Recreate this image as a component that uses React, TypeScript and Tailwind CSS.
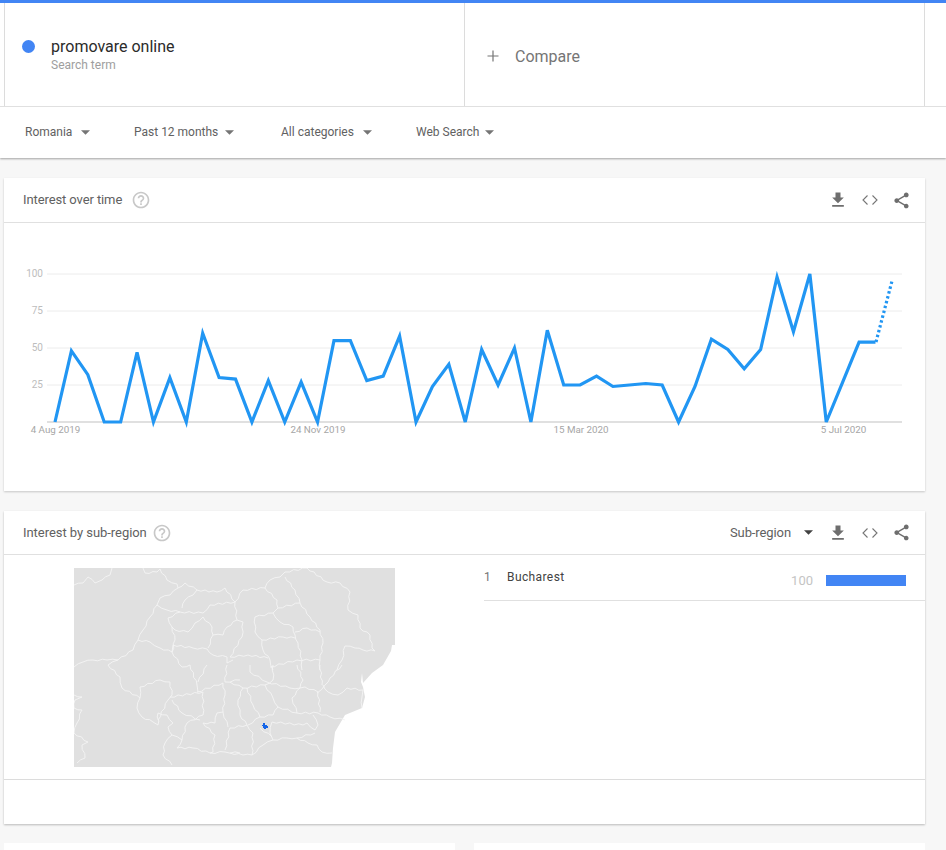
const values = [0, 48, 32, 0, 0, 47, 0, 30, 0, 60, 30, 29, 0, 28, 0, 27, 0, 55, 55, 28, 31, 58, 0, 24, 39, 0, 49, 25, 50, 0, 62, 25, 25, 31, 24, 25, 26, 25, 0, 24, 56, 49, 36, 49, 98, 61, 100, 0, 27, 54, 54];

const toPoint = (v: number, i: number) => `${55 + i * 16.41},${422 - v * 1.48}`;

const borders = [
  "112,568 110,575 102,580 95,583 88,577 83,583 74,585",
  "143,568 145,573 157,572 160,569 167,580 177,584 178,588 185,583 197,590 193,595 185,600 182,608",
  "178,588 170,595 160,598 157,605 150,617 143,630 138,640 133,650 118,660 107,660 93,660 83,662 74,667",
  "138,640 150,642 160,648 172,652 173,645 193,648 207,649 213,655 227,657 227,663 233,660",
  "157,605 167,610 180,612 203,613 210,605 235,602 237,620 227,627 223,635 213,635 208,648",
  "180,612 168,618 172,627 175,630 188,632 195,623 203,617 212,627 213,635",
  "172,627 175,640 172,652 182,667",
  "197,590 217,592 225,588 235,602",
  "280,577 285,572 307,568 327,582 340,583 350,592 348,610 358,615 360,628 370,635 372,648 375,651 363,650 355,648 345,646 342,660 337,670",
  "285,577 295,590 300,603 310,617 320,630 323,643 320,660 320,670",
  "280,577 270,580 265,588 243,590 235,602",
  "265,588 277,600 278,608 300,603",
  "278,608 273,613 255,617 255,632 262,640 263,650 270,660 273,670",
  "273,613 280,622 293,627 295,635 298,643 302,660 302,670",
  "295,632 307,628 320,632",
  "262,640 283,637 295,638",
  "243,622 242,637 230,657 248,655 268,658",
  "237,620 243,622",
  "270,667 297,660 320,660",
  "118,660 108,665 120,677 122,688 140,698 137,708 142,717 153,722 158,725 158,713 167,715 173,723 168,727 172,735 165,743 163,755 172,765",
  "140,698 140,687 160,680 170,682 172,695 168,700 158,720",
  "170,697 203,692 203,715 187,723 182,740 172,735",
  "172,700 182,713 200,720",
  "203,723 215,735 213,752 210,753 193,748 177,748 182,740",
  "210,753 225,752 240,753",
  "225,750 230,728 247,725",
  "228,727 223,712 217,713 215,723 203,723",
  "197,692 223,683 225,695 223,712",
  "190,665 197,685 198,692",
  "207,665 198,682",
  "227,665 225,682 240,680",
  "182,667 190,665",
  "74,695 82,697 75,700 74,708 82,710 77,723 74,733 88,742 82,745 85,758 77,763",
  "230,682 243,688 265,685 273,680 273,665",
  "247,688 253,705 260,717",
  "265,685 273,698 278,707 273,715 260,717 248,725",
  "238,700 240,715 247,725",
  "243,688 238,700",
  "267,682 290,688 300,688 305,687 318,692 320,712",
  "278,707 297,713 318,713 330,717 345,720",
  "297,713 292,698 300,688",
  "272,722 303,725 307,723 315,730 318,725 313,715",
  "272,722 270,733 273,740 287,738 297,738 315,733",
  "273,740 263,745 252,755 243,755 230,753",
  "247,725 253,733 252,755",
  "297,738 308,743 317,745 322,752 332,753",
  "260,728 272,737",
  "323,685 328,692 338,695 347,688 363,690 362,697 362,708",
  "317,693 325,685 330,678 342,665",
  "297,665 303,680 300,688",
  "320,665 322,685",
  "250,665 250,672 267,682",
];

// borders on the map are wobbly, split each segment and nudge the middle points
const wobble = (pts: string) => {
  const list = pts.split(" ").map((p) => p.split(",").map(Number));
  const out: string[] = [];
  list.forEach(([x, y], i) => {
    out.push(`${x},${y}`);
    const next = list[i + 1];
    if (!next) return;
    const [nx, ny] = next;
    const len = Math.hypot(nx - x, ny - y);
    const steps = Math.max(1, Math.floor(len / 4));
    for (let s = 1; s < steps; s++) {
      const off = s % 2 ? 0.8 : -0.8;
      out.push(`${x + ((nx - x) * s) / steps - ((ny - y) / len) * off},${y + ((ny - y) * s) / steps + ((nx - x) / len) * off}`);
    }
  });
  return out.join(" ");
};

function Caret({ dark }: { dark?: boolean }) {
  return (
    <svg width="9" height="5" viewBox="0 0 10 5" className={dark ? "text-[#424242]" : "text-[#757575]"}>
      <path d="M0 0h10L5 5z" fill="currentColor" />
    </svg>
  );
}

function Filter({ label, className }: { label: string; className: string }) {
  return (
    <div className={`flex items-center ${className}`}>
      <span className="-mt-[2px] text-[12px] text-[#616161]">{label}</span>
    </div>
  );
}

function Help() {
  return (
    <svg width="20" height="20" viewBox="0 0 24 24" fill="#c8c8c8">
      <path d="M11 18h2v-2h-2v2zm1-16C6.48 2 2 6.48 2 12s4.48 10 10 10 10-4.48 10-10S17.52 2 12 2zm0 18c-4.41 0-8-3.59-8-8s3.59-8 8-8 8 3.59 8 8-3.59 8-8 8zm0-14c-2.21 0-4 1.79-4 4h2c0-1.1.9-2 2-2s2 .9 2 2c0 2-3 1.75-3 5h2c0-2.25 3-2.5 3-5 0-2.21-1.79-4-4-4z" />
    </svg>
  );
}

function Actions() {
  return (
    <div className="flex items-center gap-[12px]">
      <svg width="20" height="20" viewBox="0 0 24 24" fill="#6e6e6e">
        <path d="M19 9h-4V3H9v6H5l7 7 7-7zM5 18v2h14v-2H5z" />
      </svg>
      <svg width="20" height="20" viewBox="0 0 20 20" fill="none" stroke="#757575" strokeWidth="1.1">
        <path d="M7.5 5.5 3 10l4.500 4.500M12.500 5.500 17 10l-4.500 4.500" />
      </svg>
      <svg width="19" height="19" viewBox="0 0 24 24" fill="#6e6e6e">
        <path d="M18 16.080c-.76 0-1.440.3-1.960.77L8.910 12.700c.05-.23.09-.46.09-.7s-.04-.47-.09-.7l7.050-4.110c.54.5 1.250.81 2.040.81 1.660 0 3-1.340 3-3s-1.340-3-3-3-3 1.340-3 3c0 .24.04.47.09.7L8.040 9.810C7.500 9.310 6.790 9 6 9c-1.660 0-3 1.340-3 3s1.340 3 3 3c.79 0 1.500-.31 2.040-.81l7.120 4.160c-.05.21-.08.43-.08.65 0 1.610 1.310 2.920 2.920 2.920s2.920-1.310 2.920-2.920-1.310-2.920-2.920-2.920z" />
      </svg>
    </div>
  );
}

function Chart() {
  const ticks = [
    { label: "100", y: 274 },
    { label: "75", y: 311 },
    { label: "50", y: 348 },
    { label: "25", y: 385 },
  ];
  const dates = [
    { label: "4 Aug 2019", x: 55.5 },
    { label: "24 Nov 2019", x: 318 },
    { label: "15 Mar 2020", x: 581 },
    { label: "5 Jul 2020", x: 843.5 },
  ];
  return (
    <svg width="921" height="268" viewBox="4 223 921 268" className="block" fontFamily="Roboto, sans-serif">
      {ticks.map((t) => (
        <g key={t.label}>
          <line x1="47" x2="902" y1={t.y} y2={t.y} stroke="#ececec" strokeWidth="1" />
          <text x="43" y={t.y + 3} fontSize="10" textAnchor="end" fill="#bdbdbd">{t.label}</text>
        </g>
      ))}
      <line x1="47" x2="902" y1="422" y2="422" stroke="#d6d6d6" strokeWidth="1.5" />
      {dates.map((d) => (
        <text key={d.label} x={d.x} y="433" fontSize="9.800" textAnchor="middle" fill="#a6a6a6">{d.label}</text>
      ))}
      <polyline points={values.map(toPoint).join(" ")} fill="none" stroke="#2196f3" strokeWidth="3.200" strokeLinejoin="miter" />
      <line x1="876" y1="342" x2="892" y2="281" stroke="#2196f3" strokeWidth="3.200" strokeDasharray="2.500 2.500" />
    </svg>
  );
}

function RegionMap() {
  return (
    <svg width="321" height="199" viewBox="74 568 321 199" className="block">
      <path
        d="M74 568H395V645H392L391 651L383 665L372 673L363 683L362 673L361 682L363 687L365 697L362 708L345 715L335 732L333 748L332 763L331 767H74Z"
        fill="#e0e0e0"
      />
      {borders.map((pts, i) => (
        <polyline key={i} points={wobble(pts)} fill="none" stroke="#f4f4f4" strokeWidth="0.900" />
      ))}
      <path d="M263 723h2v2h2v1h1v2h-2v1h-2v-1h-1v-2h-1v-1h1z" fill="#1565e8" />
    </svg>
  );
}

export default function App() {
  return (
    <div className="h-[850px] overflow-hidden bg-[#f7f7f7] font-['Roboto',sans-serif]">
      <div className="relative z-10 bg-white shadow-[0_1px_2px_rgba(0,0,0,0.35)]">
        <div className="h-[3px] bg-[#4285f4]" />
        <div className="flex h-[104px] border-b border-[#e0e0e0] pl-[4px] pr-[21px]">
          <div className="flex w-[461px] items-start border-x border-[#dcdcdc] pl-[17px] pt-[35px]">
            <span className="mt-[2px] size-[13px] rounded-full bg-[#4285f4]" />
            <div className="ml-[16px] -mt-[1px]">
              <div className="text-[16px] leading-[20px] text-[#2b2b2b]">promovare online</div>
              <div className="text-[12px] leading-[16px] text-[#9e9e9e]">Search term</div>
            </div>
          </div>
          <div className="flex flex-1 items-start border-r border-[#dcdcdc] pl-[21px] pt-[44px]">
            <svg width="14" height="14" viewBox="0 0 14 14" stroke="#757575" strokeWidth="1.200" className="mt-[2px]">
              <path d="M7 1.500v11M1.500 7h11" />
            </svg>
            <span className="ml-[15px] text-[16px] leading-[20px] text-[#757575]">Compare</span>
          </div>
        </div>
        <div className="flex h-[51px] items-center pl-[25px]">
          <Filter label="Romania" className="w-[56px]" />
          <Caret />
          <Filter label="Past 12 months" className="ml-[44px] w-[91px]" />
          <Caret />
          <Filter label="All categories" className="ml-[47px] w-[82px]" />
          <Caret />
          <Filter label="Web Search" className="ml-[44px] w-[69px]" />
          <Caret />
        </div>
      </div>

      <div className="pl-[4px] pr-[21px] pt-[20px]">
        <section className="h-[313px] bg-white shadow-[0_1px_2px_rgba(0,0,0,0.2)]">
          <header className="flex h-[45px] items-center justify-between border-b border-[#e0e0e0] pl-[19px] pr-[14px]">
            <div className="flex items-center gap-[9px]">
              <h2 className="text-[13px] tracking-[-0.1px] text-[#616161]">Interest over time</h2>
              <Help />
            </div>
            <Actions />
          </header>
          <Chart />
        </section>

        <section className="mt-[20px] h-[313px] bg-white shadow-[0_1px_2px_rgba(0,0,0,0.25)]">
          <header className="flex h-[44px] items-center justify-between border-b border-[#e0e0e0] pl-[19px] pr-[14px]">
            <div className="flex items-center gap-[5px]">
              <h2 className="text-[13px] tracking-[-0.05px] text-[#616161]">Interest by sub-region</h2>
              <Help />
            </div>
            <div className="flex items-center">
              <span className="text-[13px] tracking-[-0.1px] text-[#616161]">Sub-region</span>
              <span className="ml-[13px] mr-[15px]"><Caret dark /></span>
              <Actions />
            </div>
          </header>
          <div className="flex h-[225px] border-b border-[#dcdcdc]">
            <div className="w-[480px] pl-[70px] pt-[13px]">
              <RegionMap />
            </div>
            <div className="flex-1">
              <div className="flex h-[46px] border-b border-[#e0e0e0]">
                <span className="mt-[14px] w-[23px] text-[12px] leading-[16px] text-[#757575]">1</span>
                <span className="mt-[14px] flex-1 text-[12px] leading-[16px] tracking-[0.4px] text-[#424242]">Bucharest</span>
                <span className="mt-[18px] text-[13px] leading-[16px] text-[#c4c4c4]">100</span>
                <span className="ml-[13px] mr-[19px] mt-[20px] h-[11px] w-[80px] bg-[#4285f4]" />
              </div>
            </div>
          </div>
        </section>

        <div className="mt-[19px] flex gap-[19px]">
          <section className="h-[120px] w-[451px] bg-white" />
          <section className="h-[120px] flex-1 bg-white" />
        </div>
      </div>
    </div>
  );
}
